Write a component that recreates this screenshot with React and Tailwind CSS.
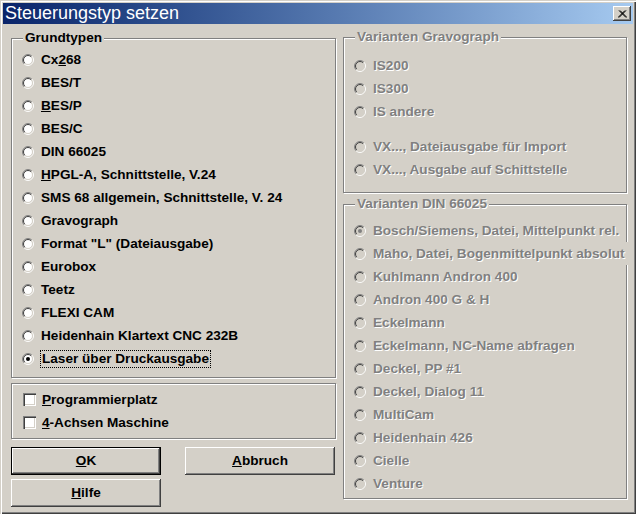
// Dialog "Steuerungstyp setzen" im Windows-2000-Stil
const FONT = "font-['Liberation_Sans',Arial,sans-serif]";

const Radio = ({ checked, disabled }) => (
  <svg width="12" height="12" viewBox="0 0 12 12" className="shrink-0">
    <circle cx="6" cy="6" r="4.5" fill={disabled ? '#d4d0c8' : '#fff'} />
    <path d="M2.111 9.889A5.5 5.5 0 0 1 9.889 2.111" fill="none" stroke="#808080" />
    <path d="M9.889 2.111A5.5 5.5 0 0 1 2.111 9.889" fill="none" stroke="#fff" />
    <path d="M2.818 9.182A4.5 4.5 0 0 1 9.182 2.818" fill="none" stroke="#404040" />
    <path d="M9.182 2.818A4.5 4.5 0 0 1 2.818 9.182" fill="none" stroke="#d4d0c8" />
    {checked && <circle cx="6" cy="6" r="2" fill={disabled ? '#808080' : '#000'} />}
  </svg>
);

const RadioRow = ({ label, checked, disabled, focused, wide }) => (
  <div
    className={`flex items-center gap-[7px] h-[23px] shrink-0 ${
      wide ? 'relative w-[276px] bg-[#d4d0c8]' : ''
    }`}
  >
    <Radio checked={checked} disabled={disabled} />
    <span
      className={`whitespace-nowrap leading-[16px] ${
        disabled ? 'text-[#808080] [text-shadow:1px_1px_0_#fff]' : 'text-black'
      } ${focused ? 'border border-dotted border-black px-px -ml-px' : ''}`}
    >
      {label}
    </span>
  </div>
);

const CheckRow = ({ label }) => (
  <div className="flex items-center gap-[6px] h-[23px]">
    <span className="w-[13px] h-[13px] bg-white shadow-[inset_1px_1px_0_#808080,inset_2px_2px_0_#404040,inset_-1px_-1px_0_#fff,inset_-2px_-2px_0_#d4d0c8]" />
    <span className="leading-[16px]">{label}</span>
  </div>
);

const GroupBox = ({ title, disabled, className, children }) => (
  <div
    className={`relative border border-[#808080] shadow-[1px_1px_0_#fff,inset_1px_1px_0_#fff] ${className}`}
  >
    {title && (
      <span
        className={`absolute -top-[9px] left-[11px] px-[2px] bg-[#d4d0c8] leading-[16px] ${
          disabled ? 'text-[#808080] [text-shadow:1px_1px_0_#fff]' : 'text-black'
        }`}
      >
        {title}
      </span>
    )}
    {children}
  </div>
);

const Button = ({ children, isDefault }) => (
  <div
    className={`w-[150px] h-[28px] flex items-center justify-center bg-[#d4d0c8] ${
      isDefault
        ? 'border border-black shadow-[inset_-1px_-1px_0_#404040,inset_1px_1px_0_#fff,inset_-2px_-2px_0_#808080]'
        : 'shadow-[inset_-1px_-1px_0_#404040,inset_1px_1px_0_#fff,inset_-2px_-2px_0_#808080]'
    }`}
  >
    {children}
  </div>
);

const grundtypen = [
  { label: <>Cx<u>2</u>68</> },
  { label: 'BES/T' },
  { label: <><u>B</u>ES/P</> },
  { label: 'BES/C' },
  { label: 'DIN 66025' },
  { label: <><u>H</u>PGL-A, Schnittstelle, V.24</> },
  { label: 'SMS 68 allgemein, Schnittstelle, V. 24' },
  { label: 'Gravograph' },
  { label: 'Format "L" (Dateiausgabe)' },
  { label: 'Eurobox' },
  { label: 'Teetz' },
  { label: 'FLEXI CAM' },
  { label: 'Heidenhain Klartext CNC 232B' },
  { label: 'Laser über Druckausgabe', checked: true, focused: true },
];

const dinVarianten = [
  { label: 'Bosch/Siemens, Datei, Mittelpunkt rel.', checked: true },
  { label: 'Maho, Datei, Bogenmittelpunkt absolut', wide: true },
  { label: 'Kuhlmann Andron 400' },
  { label: 'Andron 400 G & H' },
  { label: 'Eckelmann' },
  { label: 'Eckelmann, NC-Name abfragen' },
  { label: 'Deckel, PP #1' },
  { label: 'Deckel, Dialog 11' },
  { label: 'MultiCam' },
  { label: 'Heidenhain 426' },
  { label: 'Cielle' },
  { label: 'Venture' },
];

export default function App() {
  return (
    <div
      className={`${FONT} w-[636px] h-[514px] bg-[#d4d0c8] p-[3px] flex flex-col font-bold text-[13.6px] text-black shadow-[inset_1px_1px_0_#d4d0c8,inset_2px_2px_0_#fff,inset_-1px_-1px_0_#404040,inset_-2px_-2px_0_#808080] overflow-hidden`}
    >
      {/* Titelleiste */}
      <div className="h-[21px] shrink-0 flex items-center justify-between pl-[2px] pr-[2px] bg-gradient-to-r from-[#0a246a] to-[#a6caf0]">
        <span className="text-white font-normal text-[18px] leading-[21px] whitespace-nowrap">
          Steuerungstyp setzen
        </span>
        <div className="w-[18px] h-[15px] flex items-center justify-center bg-[#d4d0c8] shadow-[inset_-1px_-1px_0_#404040,inset_1px_1px_0_#fff,inset_-2px_-2px_0_#808080]">
          <svg width="9" height="8" viewBox="0 0 9 8">
            <path d="M1 0.5L8 7.5M2 0.5L9 7.5M8 0.5L1 7.5M7 0.5L0 7.5" stroke="#000" strokeWidth="1" />
          </svg>
        </div>
      </div>

      <div className="flex pl-[8px]">
        {/* Linke Spalte */}
        <div className="w-[325px] flex flex-col">
          <GroupBox title="Grundtypen" className="mt-[14px] h-[340px] pt-[9px] pl-[10px] flex flex-col">
            {grundtypen.map((r, i) => (
              <RadioRow key={i} {...r} />
            ))}
          </GroupBox>

          <GroupBox className="mt-[5px] h-[56px] pt-[4px] pl-[11px] flex flex-col">
            <CheckRow label={<><u>P</u>rogrammierplatz</>} />
            <CheckRow label={<><u>4</u>-Achsen Maschine</>} />
          </GroupBox>

          <div className="mt-[8px] flex gap-[24px]">
            <Button isDefault><span><u>O</u>K</span></Button>
            <Button><span><u>A</u>bbruch</span></Button>
          </div>
          <div className="mt-[4px]">
            <Button><span><u>H</u>ilfe</span></Button>
          </div>
        </div>

        {/* Rechte Spalte */}
        <div className="ml-[7px] w-[284px] flex flex-col">
          <GroupBox title="Varianten Gravograph" disabled className="mt-[13px] h-[156px] pt-[16px] pl-[10px] flex flex-col">
            <RadioRow label="IS200" disabled />
            <RadioRow label="IS300" disabled />
            <RadioRow label="IS andere" disabled />
            <div className="h-[12px] shrink-0" />
            <RadioRow label="VX..., Dateiausgabe für Import" disabled />
            <RadioRow label="VX..., Ausgabe auf Schittstelle" disabled />
          </GroupBox>

          <GroupBox title="Varianten DIN 66025" disabled className="mt-[11px] h-[295px] pt-[14px] pl-[10px] flex flex-col">
            {dinVarianten.map((r, i) => (
              <RadioRow key={i} {...r} disabled />
            ))}
          </GroupBox>
        </div>
      </div>
    </div>
  );
}
